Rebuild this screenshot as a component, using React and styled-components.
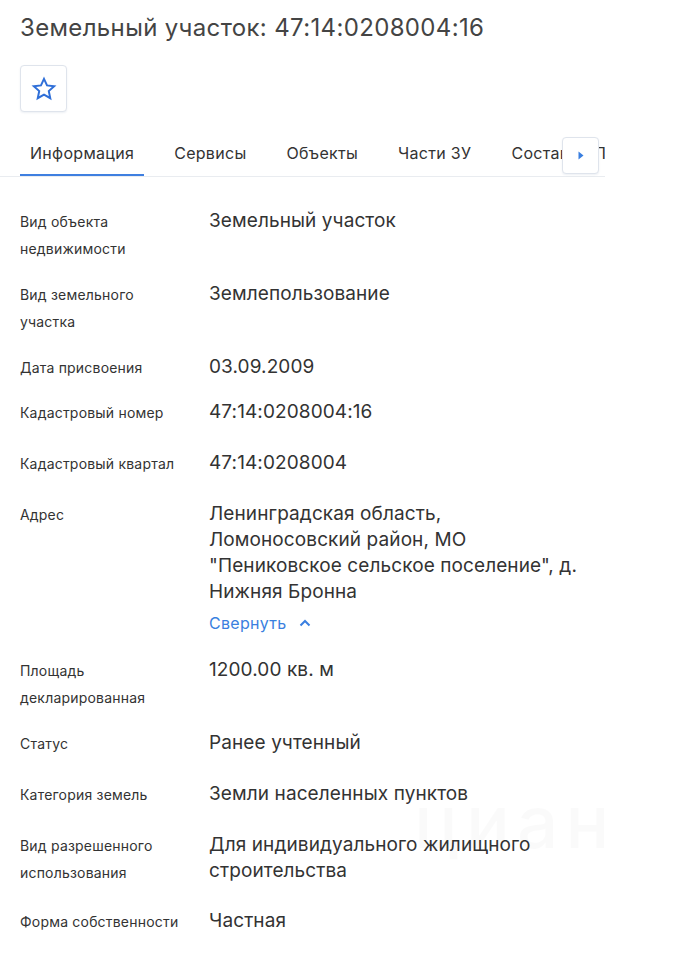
import React from 'react'
import styled, { createGlobalStyle } from 'styled-components'

const GlobalStyle = createGlobalStyle`
  body {
    margin: 0;
    background: #fff;
    font-family: Inter, Roboto, "Noto Sans", Arial, sans-serif;
    color: #333;
  }
`;

const Page = styled.div`
  position: relative;
  min-height: 960px;
`;

const Title = styled.h1`
  margin: 0;
  padding: 13px 20px 0;
  font-size: 24px;
  line-height: 30px;
  font-weight: 400;
  letter-spacing: 0.35px;
  color: #444;
`;

const IconButton = styled.button`
  display: flex;
  align-items: center;
  justify-content: center;
  width: 47px;
  height: 47px;
  margin: 22px 0 0 20px;
  padding: 0;
  background: #fff;
  border: 1px solid #dfe4ec;
  border-radius: 4px;
  box-shadow: 0 1px 2px rgba(30, 60, 110, 0.08);
`;

const TabsWrap = styled.div`
  position: relative;
  width: 605px;
  margin-top: 19px;
  border-bottom: 1px solid #e9ecf0;
`;

const TabList = styled.div`
  display: flex;
  gap: 20px;
  padding-left: 20px;
  overflow: hidden;
  white-space: nowrap;
`;

const Tab = styled.div`
  padding: 12px 10px 11px;
  font-size: 16px;
  line-height: 20px;
  letter-spacing: 0.3px;
  color: #333;
  border-bottom: 3px solid ${p => (p.$active ? '#3f7fe0' : 'transparent')};
  margin-bottom: -1px;
`;

const ScrollButton = styled.button`
  position: absolute;
  top: 6px;
  right: 6px;
  width: 37px;
  height: 37px;
  display: flex;
  align-items: center;
  justify-content: center;
  padding: 0;
  background: #fff;
  border: 1px solid #dfe4ec;
  border-radius: 4px;
  box-shadow: 0 1px 2px rgba(30, 60, 110, 0.08);
`;

const List = styled.div`
  padding: 31px 20px 0;
`;

const Row = styled.div`
  display: grid;
  grid-template-columns: 189px 390px;
  min-height: 32px;
  padding-bottom: ${p => p.$space ?? 19}px;
`;

const Label = styled.div`
  font-size: 14px;
  line-height: 27px;
  letter-spacing: 0.2px;
  color: #333;
  padding-right: 24px;
`;

const Value = styled.div`
  font-size: 19px;
  line-height: 26px;
  letter-spacing: 0.1px;
  color: #333;
  white-space: pre-line;
`;

const Collapse = styled.div`
  display: flex;
  align-items: center;
  gap: 12px;
  margin-top: 5px;
  font-size: 16px;
  line-height: 26px;
  letter-spacing: 0.3px;
  color: #3a7fe0;
`;

const Watermark = styled.div`
  position: absolute;
  left: 414px;
  top: 785px;
  font-size: 73px;
  line-height: 1;
  font-weight: 500;
  letter-spacing: 7px;
  color: rgba(0, 0, 0, 0.02);
  pointer-events: none;
`;

const rows = [
  { label: 'Вид объекта недвижимости', value: 'Земельный участок' },
  { label: 'Вид земельного участка', value: 'Землепользование' },
  { label: 'Дата присвоения', value: '03.09.2009', space: 13 },
  { label: 'Кадастровый номер', value: '47:14:0208004:16' },
  { label: 'Кадастровый квартал', value: '47:14:0208004' },
  {
    label: 'Адрес',
    value: 'Ленинградская область,\nЛомоносовский район, МО\n"Пениковское сельское поселение", д.\nНижняя Бронна',
    collapse: true,
    space: 21,
  },
  { label: 'Площадь декларированная', value: '1200.00 кв. м' },
  { label: 'Статус', value: 'Ранее учтенный' },
  { label: 'Категория земель', value: 'Земли населенных пунктов' },
  { label: 'Вид разрешенного использования', value: 'Для индивидуального жилищного\nстроительства', space: 22 },
  { label: 'Форма собственности', value: 'Частная' },
];

const tabs = ['Информация', 'Сервисы', 'Объекты', 'Части ЗУ', 'Состав ЕЗП'];

const StarIcon = () => (
  <svg width="26" height="26" viewBox="0 0 24 24" fill="none">
    <path
      d="M12 2.6l2.8 6.1 6.6.7-5 4.5 1.4 6.6L12 17.2l-5.8 3.3 1.4-6.6-5-4.5 6.6-.7z"
      stroke="#2f6fd8"
      strokeWidth="1.8"
      strokeLinejoin="miter"
    />
  </svg>
);

const App = () => {
  return (
    <Page>
      <GlobalStyle />
      <Title>Земельный участок: 47:14:0208004:16</Title>
      <IconButton aria-label="В избранное">
        <StarIcon />
      </IconButton>
      <TabsWrap>
        <TabList>
          {tabs.map((t, i) => (
            <Tab key={t} $active={i === 0}>{t}</Tab>
          ))}
        </TabList>
        <ScrollButton aria-label="Вперёд">
          <svg width="6" height="9" viewBox="0 0 6 9">
            <path d="M0.5 0.5L5.5 4.5L0.5 8.5Z" fill="#3a7fe0" />
          </svg>
        </ScrollButton>
      </TabsWrap>
      <List>
        {rows.map(r => (
          <Row key={r.label} $space={r.space}>
            <Label>{r.label}</Label>
            <Value>
              {r.value}
              {r.collapse && (
                <Collapse>
                  Свернуть
                  <svg width="12" height="8" viewBox="0 0 12 8">
                    <path d="M1.5 6.5L6 2l4.5 4.5" stroke="#3a7fe0" strokeWidth="2" fill="none" />
                  </svg>
                </Collapse>
              )}
            </Value>
          </Row>
        ))}
      </List>
      <Watermark>циан</Watermark>
    </Page>
  );
};

export default App;
